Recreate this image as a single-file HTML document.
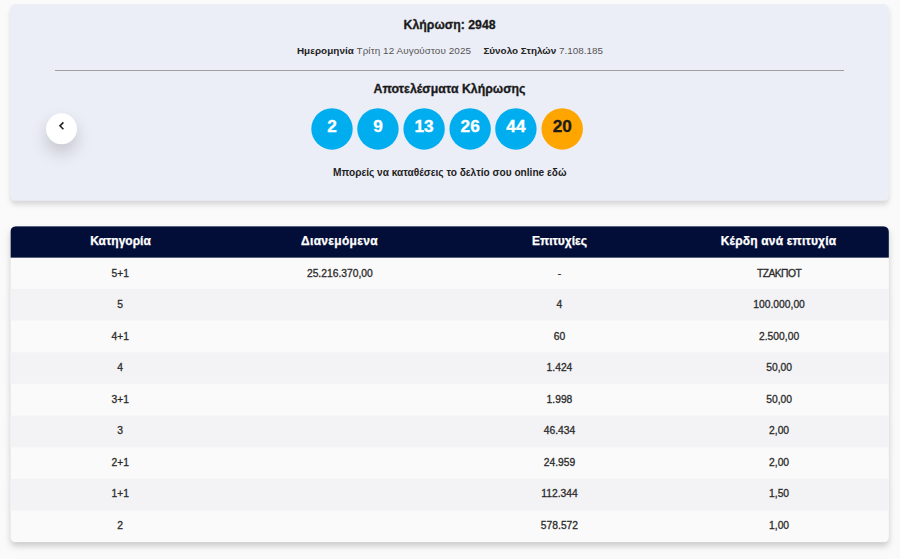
<!DOCTYPE html>
<html lang="el">
<head>
<meta charset="utf-8">
<title>Κλήρωση 2948</title>
<style>
*{box-sizing:border-box;margin:0;padding:0}
html,body{width:900px;height:559px;overflow:hidden}
body{background:#fafafa;font-family:"Liberation Sans",sans-serif;color:#222;position:relative}
svg{position:absolute;left:0;top:0}
.sh1{filter:drop-shadow(0 4px 2.8px rgba(0,0,0,.135))}
.sh2{filter:drop-shadow(0 4px 3.2px rgba(0,0,0,.19))}
.t{position:absolute;white-space:nowrap;line-height:1;transform:translateX(-50%)}
.title,.sub{font-size:12.3px;font-weight:bold;color:#1a1a1a;-webkit-text-stroke:.3px #1a1a1a}
.meta{font-size:9.9px;color:#555}
.meta b{color:#222}
.meta .gap{display:inline-block;width:12.4px}
.bn{font-size:17.2px;font-weight:bold;color:#fff;-webkit-text-stroke:.35px currentColor}
.bn.o{color:#1a1a1a}
.note{font-size:10.15px;font-weight:bold;color:#222}
.back{position:absolute;left:47px;top:114px;width:29px;height:29px;border-radius:50%;background:#fff;box-shadow:0 9px 18px rgba(0,0,0,.2)}
.th{font-size:12px;font-weight:bold;color:#fff;-webkit-text-stroke:.25px #fff}
.td{font-size:10.3px;color:#2b2b2b;-webkit-text-stroke:.3px #2b2b2b}
</style>
</head>
<body>
<svg width="900" height="559" viewBox="0 0 900 559"><defs><clipPath id="tc"><rect x="10.4" y="226.15" width="878.50" height="316.11" rx="5.5"/></clipPath></defs>
<g class="sh1"><rect x="10.4" y="4.0" width="878.50" height="196.80" rx="5.5" fill="#eceef7"/></g>
<g class="sh2"><g clip-path="url(#tc)"><rect x="10.4" y="226.15" width="878.50" height="316.11" fill="#fafafa"/>
<rect x="10.4" y="288.90" width="878.50" height="31.67" fill="#f3f3f6"/>
<rect x="10.4" y="352.24" width="878.50" height="31.67" fill="#f3f3f6"/>
<rect x="10.4" y="415.58" width="878.50" height="31.67" fill="#f3f3f6"/>
<rect x="10.4" y="478.92" width="878.50" height="31.67" fill="#f3f3f6"/>
<rect x="10.4" y="226.15" width="878.50" height="31.50" fill="#030e38"/>
</g></g>
<rect x="55" y="70" width="789" height="1" fill="#9f9f9f"/>
</svg>
<div class="t title" style="left:449.60px;top:19px">Κλήρωση: 2948</div>
<div class="t meta" style="left:449.90px;top:46px"><b style="letter-spacing:.06px">Ημερομηνία</b><span style="letter-spacing:.09px"> Τρίτη 12 Αυγούστου 2025</span><span class="gap"></span><b>Σύνολο Στηλών</b> 7.108.185</div>
<div class="t sub" style="left:449.50px;top:83px">Αποτελέσματα Κλήρωσης</div>
<div class="back"></div>
<svg width="900" height="559" viewBox="0 0 900 559"><circle cx="332.0" cy="128.95" r="20.7" fill="#00aeef"/><circle cx="377.95" cy="128.95" r="20.7" fill="#00aeef"/><circle cx="424.1" cy="128.95" r="20.7" fill="#00aeef"/><circle cx="470.15" cy="128.95" r="20.7" fill="#00aeef"/><circle cx="515.9" cy="128.95" r="20.7" fill="#00aeef"/><circle cx="562.2" cy="128.95" r="20.7" fill="#ffa500"/><circle cx="61.55" cy="128.8" r="15.45" fill="#fff"/><path d="M63.4 122.4 L59.95 125.85 L63.4 129.3" fill="none" stroke="#222" stroke-width="1.6"/></svg>
<div class="t bn" style="left:332.00px;top:118px">2</div>
<div class="t bn" style="left:377.95px;top:118px">9</div>
<div class="t bn" style="left:424.10px;top:118px">13</div>
<div class="t bn" style="left:470.15px;top:118px">26</div>
<div class="t bn" style="left:515.90px;top:118px">44</div>
<div class="t bn o" style="left:562.20px;top:118px">20</div>
<div class="t note" style="left:449.80px;top:168px">Μπορείς να καταθέσεις το δελτίο σου online εδώ</div>
<div class="t th" style="left:120.50px;top:235px">Κατηγορία</div>
<div class="t th" style="left:339.50px;top:235px;letter-spacing:.3px">Διανεμόμενα</div>
<div class="t th" style="left:559.50px;top:235px">Επιτυχίες</div>
<div class="t th" style="left:778.50px;top:235px;letter-spacing:.17px">Κέρδη ανά επιτυχία</div>
<div class="t td" style="left:120.21px;top:269px">5+1</div>
<div class="t td" style="left:339.84px;top:269px">25.216.370,00</div>
<div class="t td" style="left:559.46px;top:269px">-</div>
<div class="t td" style="left:779.09px;top:269px;letter-spacing:-.55px">ΤΖΑΚΠΟΤ</div>
<div class="t td" style="left:120.21px;top:300px">5</div>
<div class="t td" style="left:559.46px;top:300px">4</div>
<div class="t td" style="left:779.09px;top:300px">100.000,00</div>
<div class="t td" style="left:120.21px;top:332px">4+1</div>
<div class="t td" style="left:559.46px;top:332px">60</div>
<div class="t td" style="left:779.09px;top:332px">2.500,00</div>
<div class="t td" style="left:120.21px;top:363px">4</div>
<div class="t td" style="left:559.46px;top:363px">1.424</div>
<div class="t td" style="left:779.09px;top:363px">50,00</div>
<div class="t td" style="left:120.21px;top:395px">3+1</div>
<div class="t td" style="left:559.46px;top:395px">1.998</div>
<div class="t td" style="left:779.09px;top:395px">50,00</div>
<div class="t td" style="left:120.21px;top:426px">3</div>
<div class="t td" style="left:559.46px;top:426px">46.434</div>
<div class="t td" style="left:779.09px;top:426px">2,00</div>
<div class="t td" style="left:120.21px;top:458px">2+1</div>
<div class="t td" style="left:559.46px;top:458px">24.959</div>
<div class="t td" style="left:779.09px;top:458px">2,00</div>
<div class="t td" style="left:120.21px;top:489px">1+1</div>
<div class="t td" style="left:559.46px;top:489px">112.344</div>
<div class="t td" style="left:779.09px;top:489px">1,50</div>
<div class="t td" style="left:120.21px;top:521px">2</div>
<div class="t td" style="left:559.46px;top:521px">578.572</div>
<div class="t td" style="left:779.09px;top:521px">1,00</div>
</body>
</html>
